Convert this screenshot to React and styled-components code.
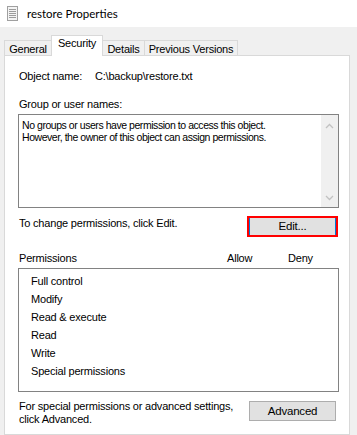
import styled, { createGlobalStyle } from 'styled-components'

const GlobalStyle = createGlobalStyle`
  html, body {
    margin: 0;
    padding: 0;
    background: #f0f0f0;
    overflow: hidden;
  }
  body {
    font-family: "Liberation Sans", Arial, sans-serif;
    font-size: 11px;
    letter-spacing: -0.2px;
    color: #000;
  }
`

const tabs = [
  { name: 'General', width: 48 },
  { name: 'Security', width: 52, active: true },
  { name: 'Details', width: 43 },
  { name: 'Previous Versions', width: 94 },
]

const permissions = [
  'Full control',
  'Modify',
  'Read & execute',
  'Read',
  'Write',
  'Special permissions',
]

function FileIcon() {
  return (
    <svg width="11" height="15" viewBox="0 0 11 15">
      <rect x="0.5" y="0.5" width="10" height="14" fill="#f4f4f4" stroke="#a0a0a0" />
      {[3, 5, 7, 9, 11].map(y => (
        <line key={y} x1="2" x2="9" y1={y + 0.5} y2={y + 0.5} stroke="#9c9c9c" />
      ))}
    </svg>
  )
}

function Chevron({ up }) {
  return (
    <svg width="9" height="6" viewBox="0 0 9 6">
      <path
        d={up ? 'M1 5 L4.5 1.5 L8 5' : 'M1 1 L4.5 4.5 L8 1'}
        fill="none"
        stroke="#c2c2c2"
        strokeWidth="1.3"
      />
    </svg>
  )
}

export default function App() {
  return (
    <Window>
      <GlobalStyle />
      <TitleBar>
        <FileIcon />
        <Title>restore Properties</Title>
      </TitleBar>

      <TabStrip>
        {tabs.map(tab => (
          <Tab key={tab.name} $width={tab.width} $active={tab.active}>{tab.name}</Tab>
        ))}
      </TabStrip>

      <Panel>
        <ObjectRow>
          <ObjectLabel>Object name:</ObjectLabel>
          <span>C:\backup\restore.txt</span>
        </ObjectRow>

        <Label $top={15}>Group or user names:</Label>
        <ListBox $height={94}>
          <Message>
            No groups or users have permission to access this object.<br />
            However, the owner of this object can assign permissions.
          </Message>
          <ScrollBar>
            <Chevron up />
            <Chevron />
          </ScrollBar>
        </ListBox>

        <ActionRow>
          <RowText>To change permissions, click Edit.</RowText>
          <Button $highlight>Edit...</Button>
        </ActionRow>

        <PermHeader>
          <span>Permissions</span>
          <span>Allow</span>
          <span>Deny</span>
        </PermHeader>
        <ListBox $height={124}>
          <PermList>
            {permissions.map(p => (
              <PermItem key={p}>{p}</PermItem>
            ))}
          </PermList>
        </ListBox>

        <FooterRow>
          <RowText>
            For special permissions or advanced settings,<br />
            click Advanced.
          </RowText>
          <Button $offset={2}>Advanced</Button>
        </FooterRow>
      </Panel>
    </Window>
  )
}

const Window = styled.div`
  width: 357px;
  height: 435px;
  display: flex;
  flex-direction: column;
  background: #f0f0f0;
  overflow: hidden;
`

const TitleBar = styled.div`
  height: 27px;
  flex: 0 0 27px;
  background: #fff;
  display: flex;
  align-items: center;
  gap: 9px;
  padding-left: 7px;
`

const Title = styled.span`
  font-family: Lato, "Liberation Sans", sans-serif;
  font-size: 11.5px;
  letter-spacing: 0;
  color: #000;
  margin-top: -1px;
`

const TabStrip = styled.div`
  display: flex;
  align-items: flex-end;
  height: 20px;
  margin-top: 8px;
  padding-left: 5px;
`

const Tab = styled.div`
  position: relative;
  width: ${p => p.$width}px;
  height: ${p => (p.$active ? 21 : 15)}px;
  box-sizing: border-box;
  display: flex;
  align-items: center;
  justify-content: center;
  border: 1px solid #d9d9d9;
  border-bottom: none;
  margin-left: -1px;
  background: ${p => (p.$active ? '#fff' : '#f0f0f0')};
  z-index: ${p => (p.$active ? 2 : 1)};
  margin-bottom: ${p => (p.$active ? -1 : 0)}px;
  padding-top: ${p => (p.$active ? 0 : 2)}px;
  padding-bottom: ${p => (p.$active ? 5 : 0)}px;
  line-height: 13px;
  white-space: nowrap;
`

const Panel = styled.div`
  flex: 1;
  margin-left: 4px;
  width: 346px;
  box-sizing: border-box;
  background: #fff;
  border: 1px solid #d9d9d9;
  padding: 0 10px 0 13px;
  display: flex;
  flex-direction: column;
  line-height: 13px;
`

const ObjectRow = styled.div`
  display: flex;
  margin-top: 14px;
  padding-left: 1px;
`

const ObjectLabel = styled.span`
  width: 76px;
`

const Label = styled.div`
  margin-top: ${p => p.$top}px;
  padding-left: 1px;
`

const ListBox = styled.div`
  position: relative;
  margin-top: 3px;
  height: ${p => p.$height}px;
  box-sizing: border-box;
  border: 1px solid #828282;
  background: #fff;
  display: flex;
`

const Message = styled.div`
  flex: 1;
  padding: 4px 0 0 3px;
  font-size: 10.5px;
  letter-spacing: -0.45px;
  line-height: 12px;
`

const ScrollBar = styled.div`
  width: 17px;
  background: #f0f0f0;
  display: flex;
  flex-direction: column;
  align-items: center;
  justify-content: space-between;
  padding: 8px 0 6px;
`

const ActionRow = styled.div`
  display: flex;
  justify-content: space-between;
  align-items: flex-start;
  margin-top: 8px;
  padding-left: 1px;
`

const RowText = styled.div`
  line-height: 13px;
  padding-top: 1px;
`

const Button = styled.div`
  width: ${p => (p.$highlight ? 91 : 87)}px;
  height: ${p => (p.$highlight ? 21 : 20)}px;
  box-sizing: border-box;
  margin-top: ${p => p.$offset || 0}px;
  margin-right: ${p => (p.$highlight ? 1 : 3)}px;
  background: #e1e1e1;
  border: ${p => (p.$highlight ? '2px solid #f00' : '1px solid #adadad')};
  box-shadow: ${p => (p.$highlight ? 'inset 1px 0 #0078d7, inset -1px 0 #0078d7' : 'none')};
  display: flex;
  align-items: center;
  justify-content: center;
  font-size: 11.5px;
`

const PermHeader = styled.div`
  display: grid;
  grid-template-columns: 208px 61px 1fr;
  margin-top: 15px;
  padding-left: 1px;
`

const PermList = styled.div`
  display: flex;
  flex-direction: column;
  padding: 3px 0 0 12px;
`

const PermItem = styled.div`
  height: 18px;
  line-height: 18px;
`

const FooterRow = styled.div`
  display: flex;
  justify-content: space-between;
  align-items: flex-start;
  margin-top: 7px;
  padding-left: 1px;
`
